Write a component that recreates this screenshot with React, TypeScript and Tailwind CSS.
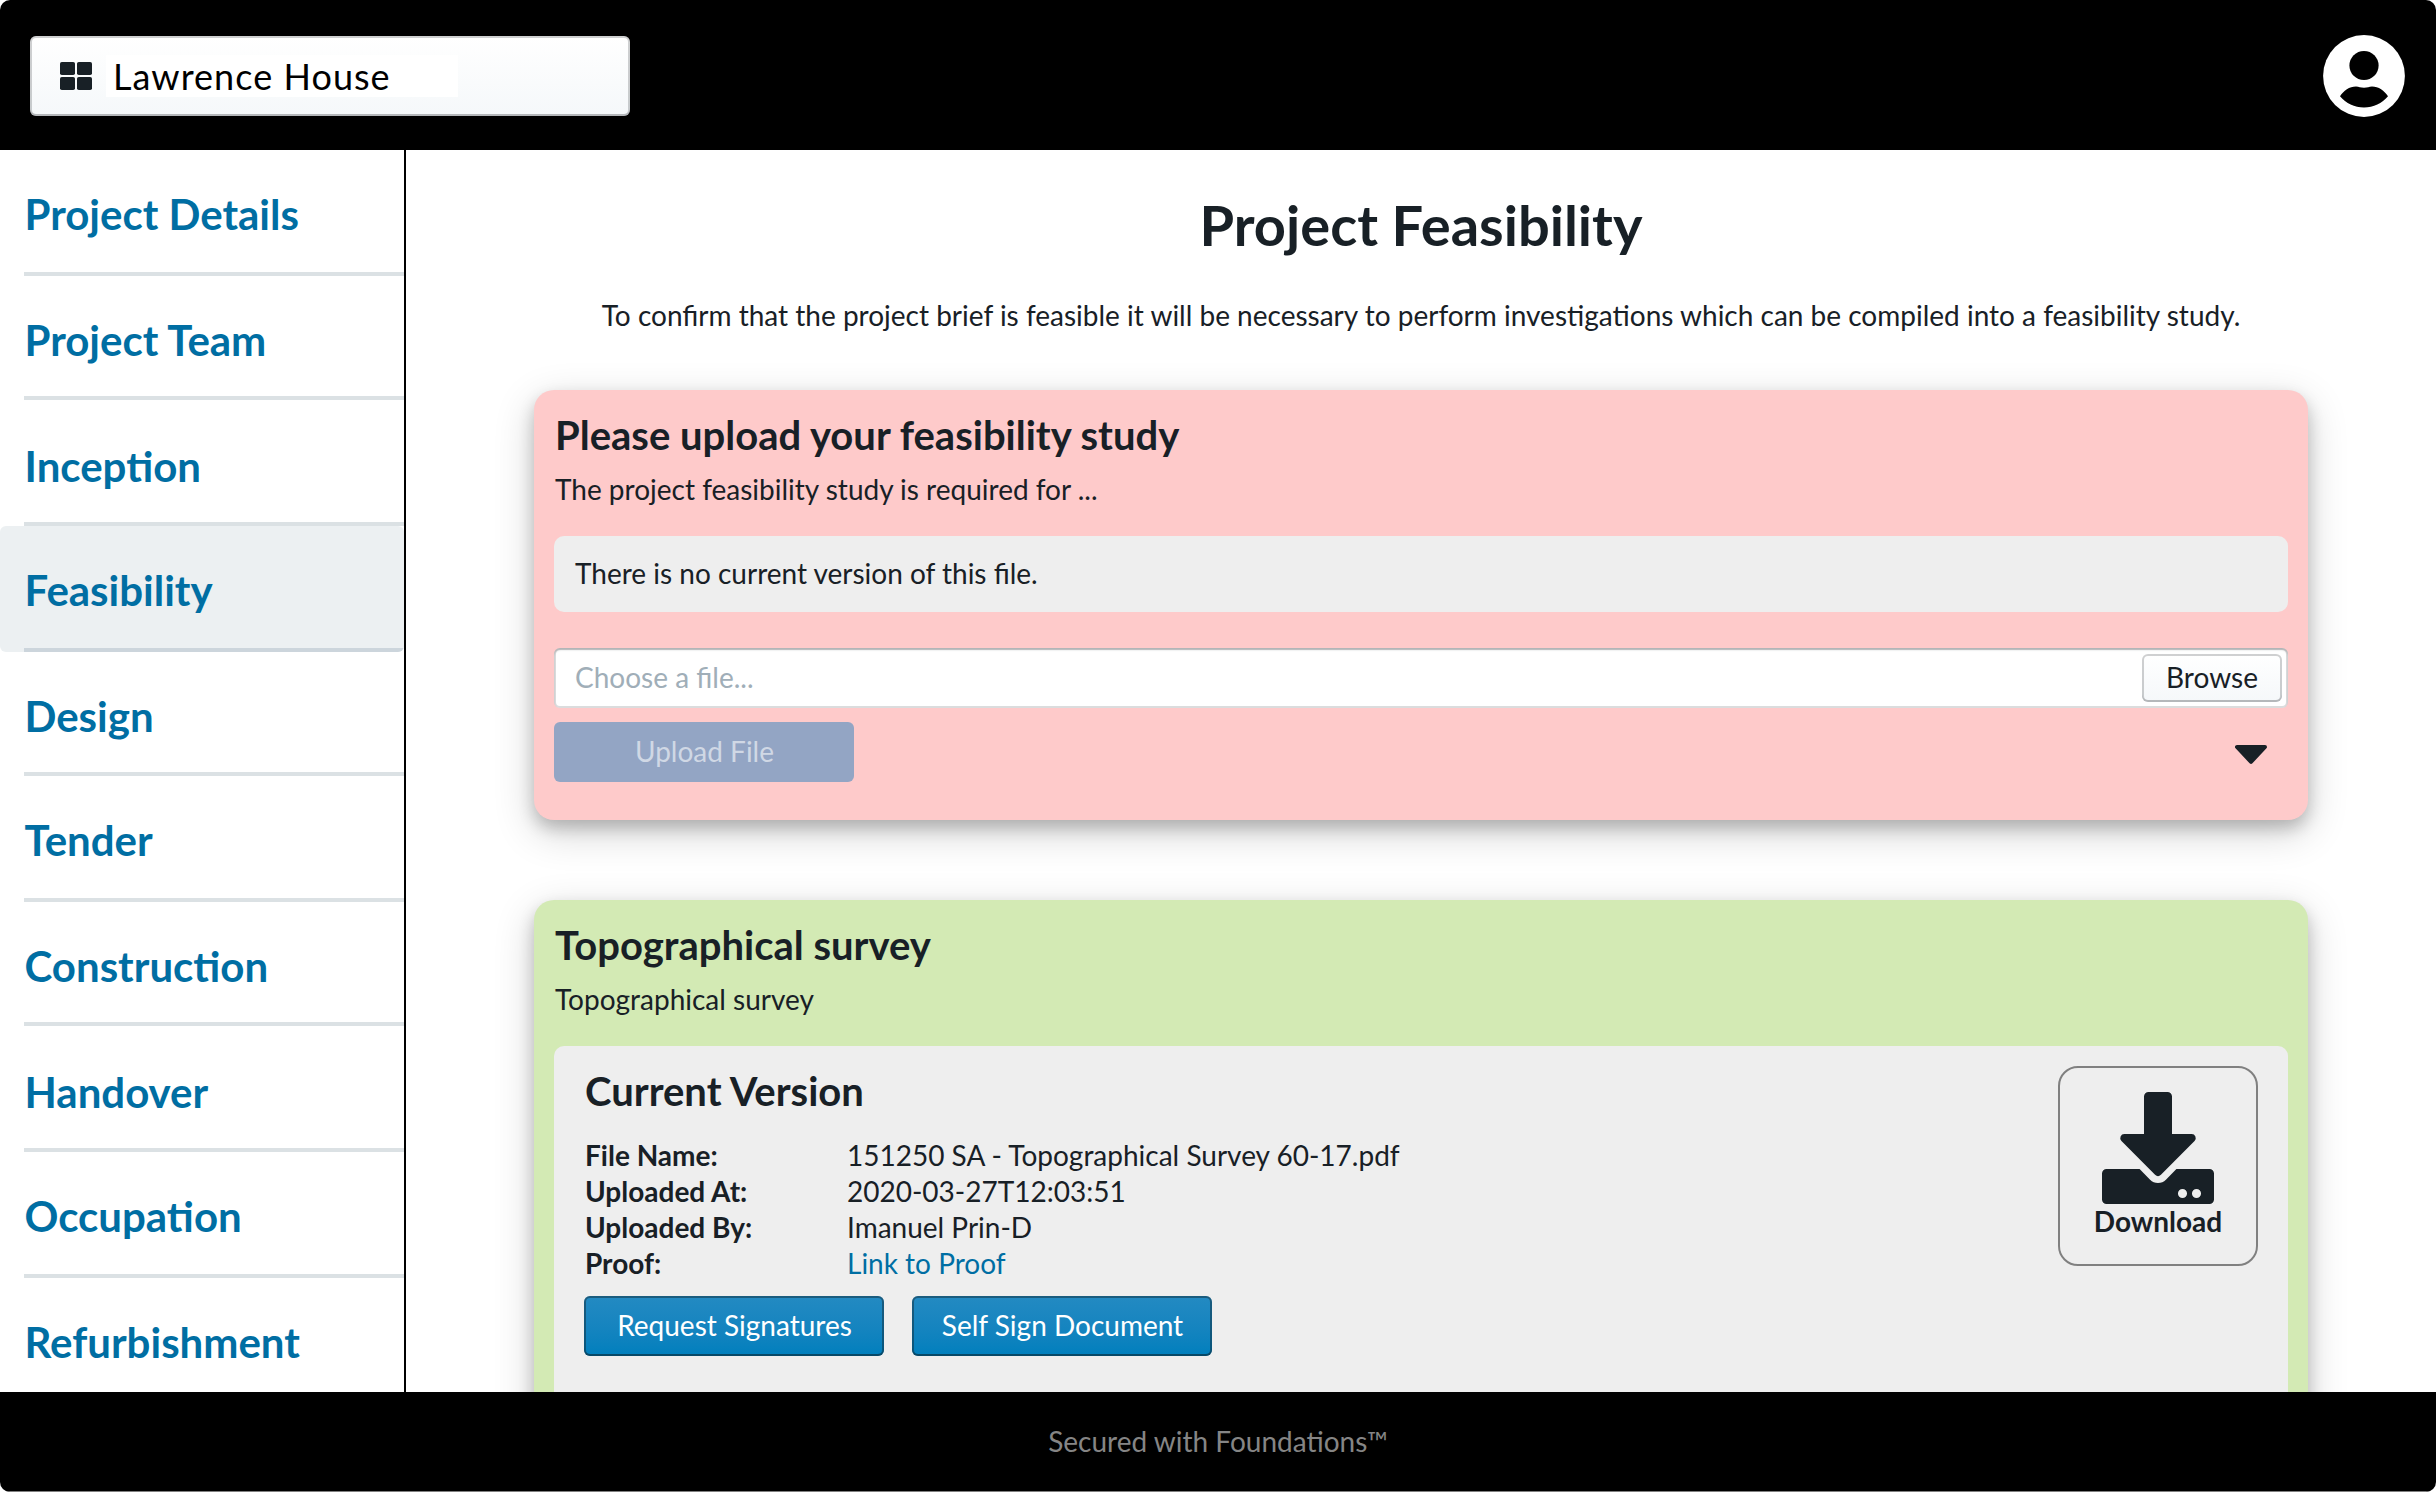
import { clsx } from "clsx";

type NavItem = { label: string; row: string; pad: string; active?: boolean };

const NAV: NavItem[] = [
  { label: "Project Details", row: "h-[126px]", pad: "pt-[37px]" },
  { label: "Project Team", row: "h-[124px]", pad: "pt-[37px]" },
  { label: "Inception", row: "h-[126px]", pad: "pt-[39px]" },
  { label: "Feasibility", row: "h-[126px]", pad: "pt-[37px]", active: true },
  { label: "Design", row: "h-[124px]", pad: "pt-[37px]" },
  { label: "Tender", row: "h-[126px]", pad: "pt-[37px]" },
  { label: "Construction", row: "h-[124px]", pad: "pt-[37px]" },
  { label: "Handover", row: "h-[126px]", pad: "pt-[39px]" },
  { label: "Occupation", row: "h-[126px]", pad: "pt-[37px]" },
  { label: "Refurbishment", row: "h-[126px]", pad: "pt-[37px]" },
];

const CARD =
  "shrink-0 rounded-[20px] px-5 pt-5 shadow-[0_8px_16px_0_rgba(0,0,0,0.2),0_12px_40px_0_rgba(0,0,0,0.19)]";
const LIGHT_BUTTON =
  "bg-linear-to-b from-white to-[#f5f8fa] rounded-[6px] shadow-[inset_0_0_0_2px_rgba(16,22,26,0.2),inset_0_-2px_0_rgba(16,22,26,0.1)]";
const BLUE_BUTTON =
  "flex h-[60px] w-[300px] items-center justify-center rounded-[6px] bg-linear-to-b from-[#238ac2] to-[#007fbd] pb-[2px] pl-px text-white shadow-[inset_0_0_0_2px_rgba(16,22,26,0.4),inset_0_-2px_0_rgba(16,22,26,0.2)]";

function GridIcon() {
  return (
    <svg width="32" height="28" viewBox="0 0 32 28" fill="#182026">
      <rect x="0" y="0" width="15" height="13" rx="1.8" />
      <rect x="17" y="0" width="15" height="13" rx="1.8" />
      <rect x="0" y="15" width="15" height="13" rx="1.8" />
      <rect x="17" y="15" width="15" height="13" rx="1.8" />
    </svg>
  );
}

function UserIcon() {
  return (
    <svg width="82" height="82" viewBox="0 0 82 82">
      <circle cx="41" cy="41" r="40.9" fill="#fff" />
      <circle cx="41" cy="30.5" r="14.6" fill="#000" />
      <path
        d="M17 61.3C20.5 55.5 26.5 51.4 33 51.4C36 51.4 37.5 52.7 41 52.7C44.5 52.7 46 51.4 49 51.4C55.5 51.4 61.5 55.5 65 61.3C59 68.5 50.5 72.4 41 72.4C31.5 72.4 23 68.5 17 61.3Z"
        fill="#000"
      />
    </svg>
  );
}

function DownloadIcon() {
  return (
    <svg width="112" height="112" viewBox="0 0 16 16" fill="#182026">
      <path d="M6 .65A.65.65 0 0 1 6.65 0h2.7A.65.65 0 0 1 10 .65V6h2.8a.58.58 0 0 1 .42.99l-4.8 4.83a.6.6 0 0 1-.84 0L2.78 6.99A.58.58 0 0 1 3.2 6H6Z" />
      <path
        fillRule="evenodd"
        d="M.65 11h4.72l1.5 1.52a1.6 1.6 0 0 0 2.26 0L10.63 11h4.72a.65.65 0 0 1 .65.65v3.7a.65.65 0 0 1-.65.65H.65a.65.65 0 0 1-.65-.65v-3.7A.65.65 0 0 1 .65 11ZM11.5 13.86a.65.65 0 1 0 0 1.3.65.65 0 0 0 0-1.3ZM13.5 13.86a.65.65 0 1 0 0 1.3.65.65 0 0 0 0-1.3Z"
      />
    </svg>
  );
}

function CaretDown() {
  return (
    <svg className="mt-[5px]" width="32" height="19" viewBox="0 0 32 19">
      <path
        d="M2 2H30L16 16.8Z"
        fill="#182026"
        stroke="#182026"
        strokeWidth="4"
        strokeLinejoin="round"
      />
    </svg>
  );
}

function Header() {
  return (
    <header className="flex h-[150px] shrink-0 items-start justify-between bg-black pr-[31px] pl-[30px]">
      <button className={clsx("mt-9 flex h-20 w-[600px] items-center pl-[30px]", LIGHT_BUTTON)}>
        <GridIcon />
        <span className="-mt-px ml-[14px] block h-[42px] w-[352px] bg-white pl-[7px] text-left text-[36px] leading-[42px] tracking-[1.04px] text-black">
          Lawrence House
        </span>
      </button>
      <div className="mt-[35px]">
        <UserIcon />
      </div>
    </header>
  );
}

function Sidebar() {
  return (
    <nav className="w-[406px] shrink-0 overflow-hidden border-r-2 border-black">
      {NAV.map((item) => (
        <div
          key={item.label}
          className={clsx(
            "flex flex-col overflow-hidden pl-6",
            item.row,
            item.active && "rounded-[6px] bg-[#ecf0f2]",
          )}
        >
          <a
            className={clsx(
              "grow border-b-4 pl-[0.5px] text-[42px] leading-[54px] font-bold text-[#006ea3]",
              item.pad,
              item.active ? "border-[#ccd5dc]" : "border-[#dbe1e4]",
            )}
          >
            {item.label}
          </a>
        </div>
      ))}
    </nav>
  );
}

function UploadCard() {
  return (
    <section className={clsx("h-[430px] bg-[#fecaca]", CARD)}>
      <h2 className="pl-px text-[40px] leading-[50px] font-bold">Please upload your feasibility study</h2>
      <p className="mt-[11px] pl-px">The project feasibility study is required for ...</p>
      <div className="mt-[29px] rounded-[10px] bg-[#eeeeee] pt-[19px] pr-5 pb-[21px] pl-[21px]">
        There is no current version of this file.
      </div>
      <div className="mt-9 flex h-[60px] items-center justify-between rounded-[6px] bg-white pr-[6px] pl-[21px] shadow-[inset_0_0_0_2px_rgba(16,22,26,0.15),inset_0_2px_2px_rgba(16,22,26,0.2)]">
        <span className="pb-[2px] text-[#a0aeb8]">Choose a file...</span>
        <button className={clsx("h-12 w-[140px] pb-[2px]", LIGHT_BUTTON)}>Browse</button>
      </div>
      <div className="mt-[14px] flex items-center justify-between pr-[21px]">
        <button className="h-[60px] w-[300px] rounded-[6px] bg-[#93a5c4] pb-[2px] pl-px text-[#d0d8e5]">
          Upload File
        </button>
        <CaretDown />
      </div>
    </section>
  );
}

const DETAILS: [string, string][] = [
  ["File Name:", "151250 SA - Topographical Survey 60-17.pdf"],
  ["Uploaded At:", "2020-03-27T12:03:51"],
  ["Uploaded By:", "Imanuel Prin-D"],
  ["Proof:", "Link to Proof"],
];

function SurveyCard() {
  return (
    <section className={clsx("mt-20 h-[600px] bg-[#d3eab4]", CARD)}>
      <h2 className="pl-px text-[40px] leading-[50px] font-bold">Topographical survey</h2>
      <p className="mt-[11px] pl-px">Topographical survey</p>
      <div className="mt-[29px] flex h-[440px] items-start justify-between rounded-[10px] bg-[#eeeeee] px-[30px] pt-5">
        <div>
          <h3 className="pl-px text-[40px] leading-[50px] font-bold">Current Version</h3>
          <dl className="mt-[21px] grid grid-cols-[262px_auto] pl-px">
            {DETAILS.map(([name, value]) => (
              <div key={name} className="contents">
                <dt className="font-bold">{name}</dt>
                <dd className={clsx(name === "Proof:" && "text-[#006ea3]")}>{value}</dd>
              </div>
            ))}
          </dl>
          <div className="mt-[15px] flex gap-7">
            <button className={BLUE_BUTTON}>Request Signatures</button>
            <button className={BLUE_BUTTON}>Self Sign Document</button>
          </div>
        </div>
        <button className="flex size-[200px] flex-col items-center rounded-[20px] border-2 border-[#808080] pt-6 font-bold">
          <DownloadIcon />
          <span className="-mt-px">Download</span>
        </button>
      </div>
    </section>
  );
}

export default function App() {
  return (
    <div className="h-[1492px] w-[2436px] bg-white">
      <div className="flex h-full flex-col overflow-hidden rounded-[10px] bg-white font-[Lato,sans-serif] text-[28px] leading-9 text-[#182026]">
        <Header />
        <div className="flex h-[1242px] shrink-0 overflow-hidden">
          <Sidebar />
          <main className="flex grow flex-col overflow-hidden px-32 pt-[43px]">
            <h1 className="text-center text-[56px] leading-[64px] font-bold">Project Feasibility</h1>
            <p className="mt-10 mb-[57px] text-center">
              To confirm that the project brief is feasible it will be necessary to perform investigations which
              can be compiled into a feasibility study.
            </p>
            <UploadCard />
            <SurveyCard />
          </main>
        </div>
        <footer className="flex h-[100px] shrink-0 items-center justify-center border-b border-[#808080] bg-black pb-px text-[#858585]">
          Secured with Foundations™
        </footer>
      </div>
    </div>
  );
}
